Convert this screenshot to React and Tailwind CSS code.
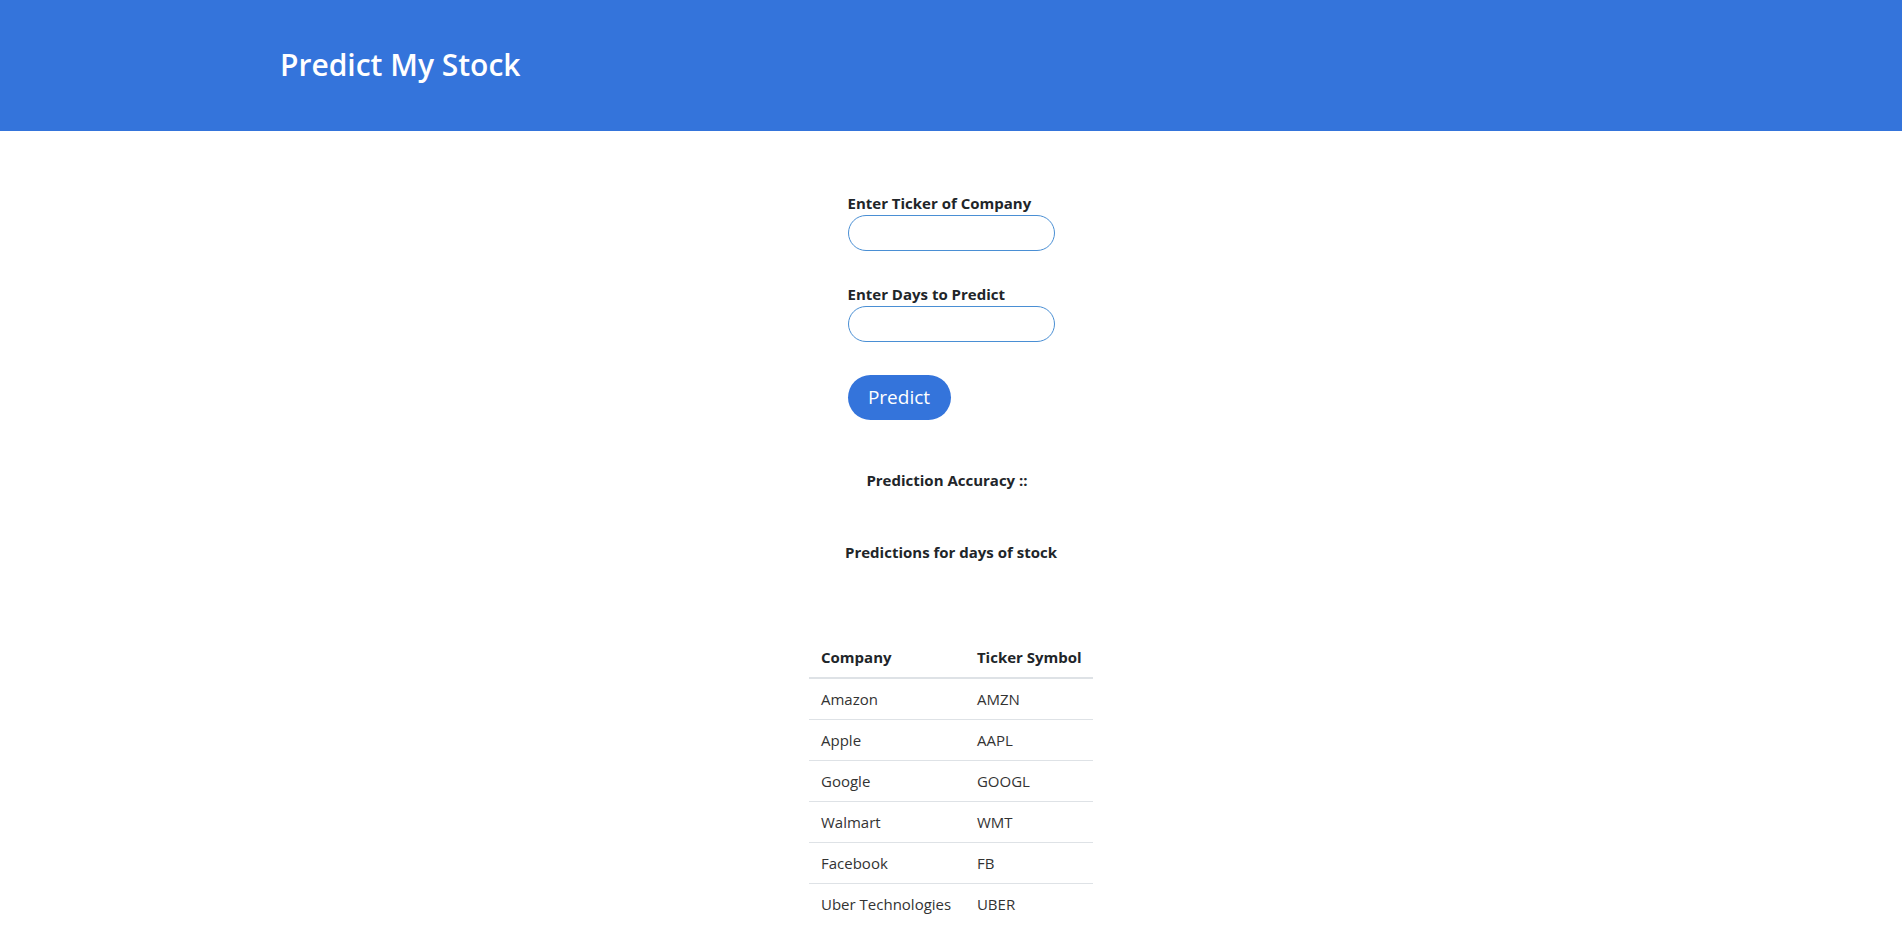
import { useState } from 'react';

const companies = [
    { name: "Amazon", ticker: "AMZN" },
    { name: "Apple", ticker: "AAPL" },
    { name: "Google", ticker: "GOOGL" },
    { name: "Walmart", ticker: "WMT" },
    { name: "Facebook", ticker: "FB" },
    { name: "Uber Technologies", ticker: "UBER" },
];

const App = () => {
    const [ticker, setTicker] = useState("");
    const [days, setDays] = useState("");

    return (
        <div className="min-h-screen bg-white text-[#212529]" style={{ fontFamily: '"Open Sans", "Noto Sans", sans-serif' }}>
            <header className="h-[131px] bg-[#3474db] flex items-center">
                <h1 className="ml-[280px] -mt-[2px] text-[30px] font-semibold text-white">Predict My Stock</h1>
            </header>

            <div className="flex flex-col items-center">
                <div className="w-[207px] mt-[62px] flex flex-col">
                    <label className="text-[15px] font-bold leading-[21px]">Enter Ticker of Company</label>
                    <input
                        value={ticker}
                        onChange={(e) => setTicker(e.target.value)}
                        className="mt-[1px] h-[36px] w-[207px] rounded-full border border-[#4a8fd4] px-3 outline-none"
                    />

                    <label className="mt-[33px] text-[15px] font-bold leading-[21px]">Enter Days to Predict</label>
                    <input
                        value={days}
                        onChange={(e) => setDays(e.target.value)}
                        className="mt-[1px] h-[36px] w-[207px] rounded-full border border-[#4a8fd4] px-3 outline-none"
                    />

                    <button className="mt-[33px] h-[45px] w-[103px] rounded-full bg-[#3474db] text-white text-[19px]">
                        Predict
                    </button>
                </div>

                <p className="mt-[50px] mr-[8px] text-[15px] font-bold leading-[21px]">Prediction Accuracy ::</p>
                <p className="mt-[51px] text-[15px] font-bold leading-[21px]">Predictions for days of stock</p>

                <table className="mt-[74px] w-[284px] text-[15px]">
                    <thead>
                        <tr className="border-b-2 border-[#dee2e6]">
                            <th className="text-left font-bold pl-[12px] py-[9px] leading-[22px]">Company</th>
                            <th className="text-left font-bold pl-[12px] py-[9px] leading-[22px]">Ticker Symbol</th>
                        </tr>
                    </thead>
                    <tbody>
                        {companies.map((c, i) => (
                            <tr key={c.ticker} className={i < companies.length - 1 ? "border-b border-[#dee2e6]" : ""}>
                                <td className="pl-[12px] py-[9px] leading-[22px] text-[#333]">{c.name}</td>
                                <td className="pl-[12px] py-[9px] leading-[22px] text-[#333]">{c.ticker}</td>
                            </tr>
                        ))}
                    </tbody>
                </table>
            </div>
        </div>
    );
};

export default App;
